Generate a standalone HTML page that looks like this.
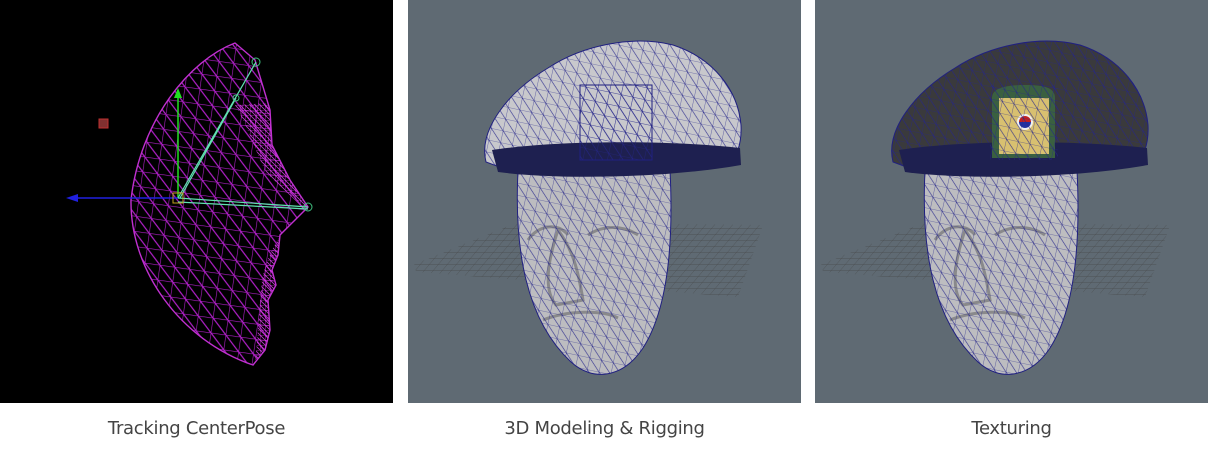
<!DOCTYPE html>
<html><head><style>
html,body{margin:0;padding:0;background:#fff;width:1208px;height:462px;overflow:hidden}
.p{position:absolute;top:0;height:403px}
.c{position:absolute;top:418px;font-family:"DejaVu Sans","Liberation Sans",sans-serif;font-size:18px;color:#444;text-align:center;width:393px;letter-spacing:-0.3px}
</style></head><body>
<svg class="p" style="left:0" width="393" height="403" viewBox="0 0 393 403">
<defs>
<pattern id="mg" width="15" height="15" patternUnits="userSpaceOnUse" patternTransform="rotate(8)">
<path d="M0 0H15M0 0V15M0 0L15 15" stroke="#b020c8" stroke-width="1.2" fill="none"/></pattern>
<pattern id="mg2" width="5" height="5" patternUnits="userSpaceOnUse">
<path d="M0 0H5M0 0V5M0 0L5 5" stroke="#e040f0" stroke-width="0.8" fill="none"/></pattern>
<clipPath id="fc"><path d="M235 43 C190 60 140 120 131 200 C130 270 180 340 253 365 L265 350 270 330 268 300 276 285 272 270 278 255 280 235 290 225 308 207 290 180 272 145 270 110 255 60Z"/></clipPath>
</defs>
<rect width="393" height="403" fill="#000"/>
<g clip-path="url(#fc)"><rect width="393" height="403" fill="url(#mg)"/>
<path d="M235 105 C250 130 258 160 268 175 C285 190 300 205 305 210 C290 225 270 240 262 280 C258 320 258 340 255 360 L320 360 320 100Z" fill="url(#mg2)" opacity="0.85"/></g>
<path d="M235 43 C190 60 140 120 131 200 C130 270 180 340 253 365 L265 350 270 330 268 300 276 285 272 270 278 255 280 235 290 225 308 207 290 180 272 145 270 110 255 60Z" fill="none" stroke="#c030d0" stroke-width="1.4"/>
<rect x="99" y="119" width="9" height="9" fill="#803030" stroke="#c03030"/>
<line x1="178" y1="198" x2="178" y2="95" stroke="#20e020" stroke-width="1.5"/>
<path d="M178 88 L174 98 L182 98Z" fill="#20e020"/>
<line x1="178" y1="198" x2="75" y2="198" stroke="#2020e0" stroke-width="1.5"/>
<path d="M66 198 L78 194 L78 202Z" fill="#2020e0"/>
<path d="M178 198 L256 62 M180 198 L236 98 M178 198 L308 207 M178 202 L308 209" stroke="#60e0b0" stroke-width="1.2" fill="none"/>
<rect x="173" y="193" width="10" height="10" fill="none" stroke="#c0a020"/>
<circle cx="256" cy="62" r="4" fill="none" stroke="#40c080"/>
<circle cx="236" cy="98" r="3" fill="none" stroke="#40c080"/>
<circle cx="308" cy="207" r="4" fill="none" stroke="#40c080"/>
</svg>

<svg width="0" height="0" style="position:absolute">
<defs>
<pattern id="bm" width="12" height="12" patternUnits="userSpaceOnUse" patternTransform="rotate(12)">
<path d="M0 0H12M0 0V12M0 0L12 12" stroke="#25258a" stroke-width="0.6" fill="none"/></pattern>
<pattern id="gr" width="9" height="6" patternUnits="userSpaceOnUse" patternTransform="skewX(-40)">
<path d="M0 0H9M0 0V6" stroke="#444" stroke-width="0.6" fill="none"/></pattern>
<g id="head">
<path d="M2 266 L110 222 L355 225 L330 297 L10 272Z" fill="url(#gr)"/>
<path d="M110 170 C106 250 118 320 163 362 C185 382 215 378 235 348 C258 312 266 250 262 170Z" fill="#bdbdc0"/>
<path d="M150 230 C140 260 135 290 148 305 L175 300 C170 270 165 250 150 230Z M120 240 C130 225 150 222 160 235 M180 235 C195 225 215 225 230 235 M135 320 C160 310 195 310 210 318" fill="none" stroke="#555" stroke-width="3" opacity="0.5"/>
<path d="M110 170 C106 250 118 320 163 362 C185 382 215 378 235 348 C258 312 266 250 262 170Z" fill="url(#bm)" stroke="#202080"/>
</g>
</defs></svg>

<svg class="p" style="left:408px" width="393" height="403" viewBox="0 0 393 403">
<rect width="393" height="403" fill="#5f6a73"/>
<use href="#head"/>
<path d="M78 162 C70 130 100 92 140 68 C175 45 225 35 265 45 C305 58 330 90 333 125 C334 145 328 158 320 165 L105 172Z" fill="#c8c8cc"/>
<path d="M78 162 C70 130 100 92 140 68 C175 45 225 35 265 45 C305 58 330 90 333 125 C334 145 328 158 320 165 L105 172Z" fill="url(#bm)" stroke="#202080"/>
<path d="M84 150 C150 140 260 140 332 148 L333 165 C260 178 150 180 90 172Z" fill="#1e2050"/>
<rect x="172" y="85" width="72" height="75" fill="url(#bm)" stroke="#202080"/>
</svg>

<svg class="p" style="left:815px" width="393" height="403" viewBox="0 0 393 403">
<rect width="393" height="403" fill="#5f6a73"/>
<use href="#head"/>
<path d="M78 162 C70 130 100 92 140 68 C175 45 225 35 265 45 C305 58 330 90 333 125 C334 145 328 158 320 165 L105 172Z" fill="#3a3a3c"/>
<path d="M78 162 C70 130 100 92 140 68 C175 45 225 35 265 45 C305 58 330 90 333 125 C334 145 328 158 320 165 L105 172Z" fill="url(#bm)" stroke="#202080"/>
<path d="M84 150 C150 140 260 140 332 148 L333 165 C260 178 150 180 90 172Z" fill="#1e2050"/>
<path d="M177 158 V98 C177 88 190 85 210 85 C230 85 240 88 240 98 V158Z" fill="#3a6040"/>
<rect x="184" y="98" width="50" height="56" fill="#d8c070"/>
<circle cx="210" cy="122" r="8" fill="#f0f0f0"/>
<path d="M204 122 A6 6 0 0 1 216 122Z" fill="#c02020"/>
<path d="M204 122 A6 6 0 0 0 216 122Z" fill="#2030a0"/>
<rect x="175" y="85" width="68" height="75" fill="url(#bm)"/>
</svg>

<div class="c" style="left:0">Tracking CenterPose</div>
<div class="c" style="left:408px">3D Modeling &amp; Rigging</div>
<div class="c" style="left:815px">Texturing</div>
</body></html>
